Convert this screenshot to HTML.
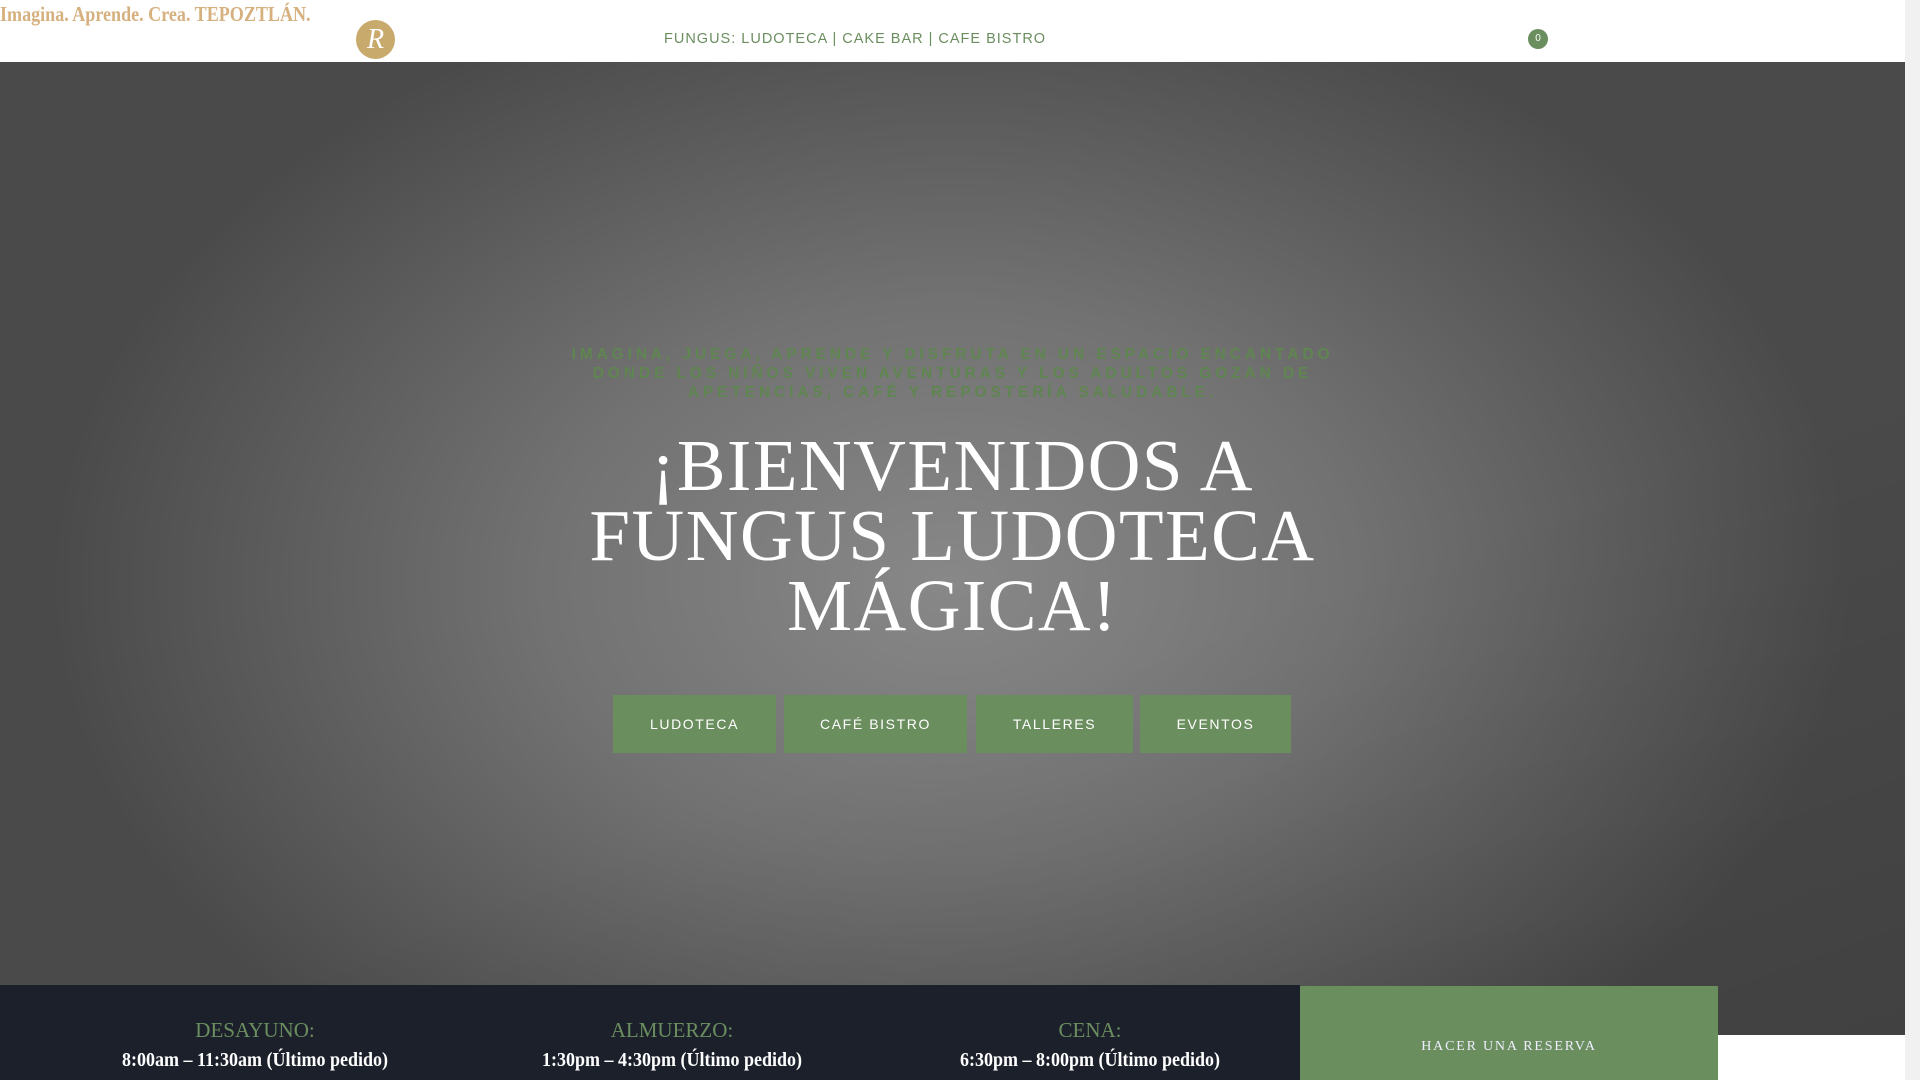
<!DOCTYPE html>
<html><head><meta charset="utf-8"><style>
*{margin:0;padding:0;box-sizing:border-box}
html,body{width:1920px;height:1080px;overflow:hidden;background:#fff;font-family:"Liberation Sans",sans-serif}
.hdr{position:absolute;left:0;top:0;width:1905px;height:62px;background:#fff}
.tag{position:absolute;left:0;top:2px;font-family:"Liberation Serif",serif;font-size:21px;color:#d6b07e;font-weight:bold;transform:scaleX(0.86);transform-origin:left top;white-space:nowrap}
.logo{position:absolute;left:356px;top:20px;width:39px;height:39px;border-radius:50%;background:#c8aa6c;color:#fff;font-family:"Liberation Serif",serif;font-style:italic;font-size:28px;text-align:center;line-height:39px}
.nav{position:absolute;left:664px;top:31px;font-size:14.5px;letter-spacing:1px;color:#6b8e5f;white-space:nowrap}
.cart{position:absolute;left:1528px;top:29px;width:20px;height:20px;border-radius:50%;background:#6b8e5f;color:#fff;font-size:10px;text-align:center;line-height:20px}
.hero{position:absolute;left:0;top:62px;width:1905px;height:973px;background:radial-gradient(ellipse 900px 620px at 950px 520px,#888 0%,#727272 45%,#5c5c5c 75%,#4a4a4a 100%)}
.hero:after{content:"";position:absolute;inset:0;background:linear-gradient(160deg,rgba(0,0,0,0) 60%,rgba(0,0,0,.12) 100%)}
.sub{position:absolute;left:0;width:1905px;top:283px;text-align:center;font-size:15.5px;font-weight:bold;letter-spacing:3.9px;line-height:19px;color:#5f8650;z-index:2}
.h1{position:absolute;left:0;width:1905px;top:369px;text-align:center;font-family:"Liberation Serif",serif;font-size:73px;letter-spacing:1.5px;line-height:70px;color:#fff;z-index:2}
.btn{position:absolute;top:633px;height:58px;background:#6b8e5f;color:#fff;font-size:14px;letter-spacing:1.6px;text-align:center;line-height:58px;z-index:2}
.scroll{position:absolute;left:1905px;top:0;width:15px;height:1080px;background:#f1f1f1}
.bot{position:absolute;left:0;top:985px;width:1300px;height:95px;background:#1b202b}
.col{position:absolute;top:1018px;width:420px;text-align:center;font-family:"Liberation Serif",serif}
.col .t{font-size:21px;color:#6b8e5f}
.col .h{font-size:20px;color:#fff;font-weight:bold;margin-top:6px;transform:scaleX(0.9)}
.res{position:absolute;left:1300px;top:986px;width:418px;height:94px;background:#6b8e5f;color:#eef;font-family:"Liberation Serif",serif;font-size:14px;letter-spacing:1.8px;text-align:center;padding-top:53px}
</style></head><body>
<div class="hdr">
<div class="tag">Imagina. Aprende. Crea. TEPOZTLÁN.</div>
<div class="logo">R</div>
<div class="nav">FUNGUS: LUDOTECA | CAKE BAR | CAFE BISTRO</div>
<div class="cart">0</div>
</div>
<div class="hero">
<div class="sub">IMAGINA, JUEGA, APRENDE Y DISFRUTA EN UN ESPACIO ENCANTADO<br>DONDE LOS NIÑOS VIVEN AVENTURAS Y LOS ADULTOS GOZAN DE<br>APETENCIAS, CAFÉ Y REPOSTERÍA SALUDABLE.</div>
<div class="h1">¡BIENVENIDOS A<br>FUNGUS LUDOTECA<br>MÁGICA!</div>
<div class="btn" style="left:613px;width:163px">LUDOTECA</div>
<div class="btn" style="left:784px;width:183px">CAFÉ BISTRO</div>
<div class="btn" style="left:976px;width:157px">TALLERES</div>
<div class="btn" style="left:1140px;width:151px">EVENTOS</div>
</div>
<div class="bot"></div>
<div class="col" style="left:45px"><div class="t">DESAYUNO:</div><div class="h">8:00am – 11:30am (Último pedido)</div></div>
<div class="col" style="left:462px"><div class="t">ALMUERZO:</div><div class="h">1:30pm – 4:30pm (Último pedido)</div></div>
<div class="col" style="left:880px"><div class="t">CENA:</div><div class="h">6:30pm – 8:00pm (Último pedido)</div></div>
<div class="res">HACER UNA RESERVA</div>
<div class="scroll"></div>
</body></html>
